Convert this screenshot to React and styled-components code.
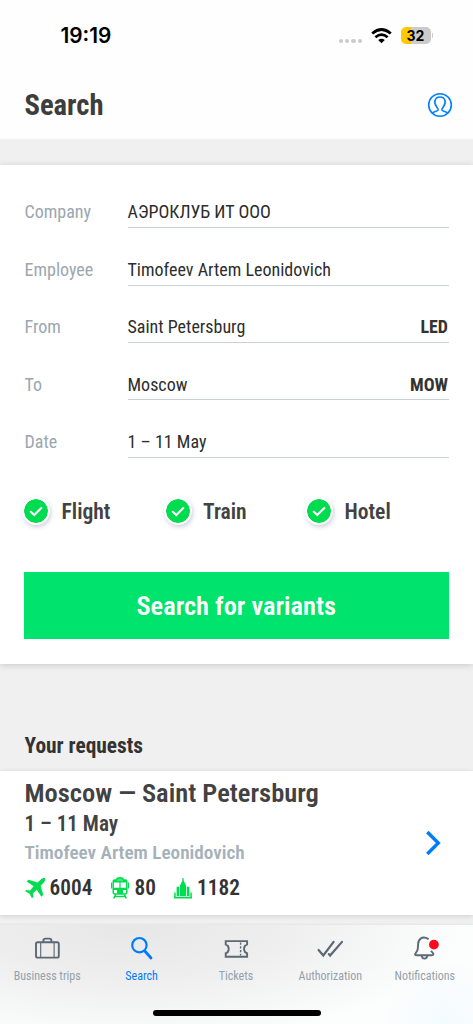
import React from "react";
import styled, { createGlobalStyle } from "styled-components";

const Global = createGlobalStyle`
  * { box-sizing: border-box; }
  body { margin: 0; background: #f0f0f0; }
`;

const Screen = styled.div`
  width: 473px;
  height: 1024px;
  overflow: hidden;
  display: flex;
  flex-direction: column;
  background: #f0f0f0;
  font-family: "Roboto Condensed", Roboto, sans-serif;
  font-stretch: 75%;
  color: #424242;
`;

const Text = styled.span`
  display: block;
  white-space: nowrap;
  margin: 0;
  font-size: ${(p) => p.$size}px;
  line-height: ${(p) => p.$line || p.$size * 1.2}px;
  font-weight: ${(p) => p.$weight || 400};
  color: ${(p) => p.$color || "#424242"};
`;

const Top = styled.header`
  flex: none;
  height: 139px;
  background: #fefefe;
`;

const StatusBar = styled.div`
  height: 70px;
  padding: 1px 40px 0 60.5px;
  display: flex;
  align-items: center;
  justify-content: space-between;
`;

const Clock = styled.span`
  font: 600 20.8px/24px Inter, sans-serif;
  color: #000;
`;

const StatusIcons = styled.div`
  display: flex;
  align-items: center;
`;

const Dots = styled.div`
  display: flex;
  gap: 2.2px;
  margin: 11px 8.5px 0 0;
  i { width: 4.2px; height: 4.2px; border-radius: 50%; background: #cbcbcb; }
`;

const Battery = styled.div`
  width: 30px;
  height: 17px;
  margin-left: 9px;
  border-radius: 5px;
  text-align: center;
  background: linear-gradient(90deg, #ffc800 10px, #cbcbcb 10px);
  font: 700 14px/17px Inter, sans-serif;
  color: #000;
`;

const BatteryTip = styled.div`
  width: 1.5px;
  height: 5px;
  margin-left: 1px;
  border-radius: 0 2px 2px 0;
  background: #cbcbcb;
`;

const TitleBar = styled.div`
  height: 70px;
  padding: 0 20px 0 24.5px;
  display: flex;
  align-items: center;
  justify-content: space-between;
`;

const SearchPanel = styled.section`
  flex: none;
  height: 499px;
  margin-top: 26px;
  padding: 18.3px 24px 0 24.5px;
  background: #fff;
  box-shadow: 0 1px 7px rgba(0, 0, 0, 0.17);
`;

const Field = styled.div`
  height: 57.35px;
  display: flex;
  align-items: flex-start;
`;

const FieldLabel = styled.div`
  width: 103px;
  padding-top: 18.2px;
`;

const FieldValue = styled.div`
  flex: 1;
  height: 45px;
  padding: 18.2px 1px 0 0;
  display: flex;
  justify-content: space-between;
  border-bottom: 1.5px solid #c9d1d4;
`;

const Options = styled.div`
  display: flex;
  height: 56px;
  margin-top: 13px;
  align-items: center;
`;

const Option = styled.div`
  width: 141.5px;
  display: flex;
  align-items: center;
  gap: 11.5px;
`;

const OptionName = styled(Text)`
  padding-top: 2px;
`;

const Check = styled.div`
  width: 28px;
  height: 28px;
  margin-left: -2.5px;
  border: 2px solid #fff;
  border-radius: 50%;
  background: #00dc50;
  background-clip: padding-box;
  box-shadow: 1px 2px 4px rgba(50, 60, 100, 0.24);
  svg { display: block; }
`;

const SearchButton = styled.button`
  width: 424.5px;
  height: 67px;
  margin: 33px 0 0 -0.5px;
  padding: 0;
  display: flex;
  align-items: center;
  justify-content: center;
  border: 0;
  background: #00e36c;
  font-family: inherit;
  font-stretch: inherit;
`;

const SectionTitle = styled.div`
  flex: none;
  height: 107px;
  padding: 68px 24.5px 0;
`;

const RequestCard = styled.article`
  flex: none;
  height: 143.5px;
  padding: 6px 32.5px 0 24.5px;
  display: flex;
  justify-content: space-between;
  background: #fff;
  box-shadow: 0 1px 5px rgba(0, 0, 0, 0.14);
`;

const Prices = styled.div`
  display: flex;
  align-items: center;
  margin-top: 8px;
  height: 26px;
`;

const Price = styled.div`
  display: flex;
  align-items: center;
  gap: ${(p) => p.$gap}px;
  width: ${(p) => p.$width}px;
`;

const TabBar = styled.nav`
  flex: none;
  height: 99px;
  margin-top: 10.5px;
  display: flex;
  flex-direction: column;
  align-items: center;
  justify-content: space-between;
  background: radial-gradient(circle at 445px 95px, rgba(243, 251, 255, 0.9), transparent 60px),
    radial-gradient(ellipse 330px 120px at 130px 0, #e7e7e7, #eeeeee 45%, #fcfdfd 100%);
  box-shadow: 0 -1px 2px rgba(0, 0, 0, 0.05);
`;

const Tabs = styled.div`
  width: 472px;
  display: grid;
  grid-template-columns: repeat(5, 1fr);
  align-self: flex-start;
`;

const Tab = styled.div`
  display: flex;
  flex-direction: column;
  align-items: center;
  padding-top: 10.5px;
  gap: 5.5px;
`;

const HomeIndicator = styled.div`
  width: 168px;
  height: 6px;
  margin-bottom: 8px;
  border-radius: 3px;
  background: #000;
`;

const WifiIcon = () => (
  <svg width="21" height="16" viewBox="0 0 21 16">
    <g fill="none" stroke="#000" strokeWidth="2.7">
      <path d="M1.2 5.6 Q10.5-2.6 19.8 5.6" />
      <path d="M4.4 9.2 Q10.5 4 16.6 9.2" />
    </g>
    <path d="M7.2 12 Q10.5 9.4 13.8 12 L10.5 15.2Z" />
  </svg>
);

const ProfileIcon = () => (
  <svg width="26" height="26" viewBox="0 0 26 26" fill="none" stroke="#0080ff" strokeWidth="1.6">
    <circle cx="13" cy="13" r="11.3" />
    <path d="M5 21.4C6.4 19.6 10.7 19.5 11.1 18C11.3 16.8 10.7 16.4 9.6 14.8C6.4 10.4 7.6 5 13 5S19.6 10.4 16.4 14.8C15.3 16.4 14.7 16.8 14.9 18C15.3 19.5 19.6 19.6 21 21.4" />
  </svg>
);

const CheckIcon = () => (
  <svg width="24" height="24" viewBox="0 0 24 24">
    <path d="M6.8 12.8 10.3 16.1 17.3 9" fill="none" stroke="#fff" strokeWidth="2.1" strokeLinecap="round" />
  </svg>
);

const PlaneIcon = () => (
  <svg width="21" height="22" viewBox="0 0 22 22" fill="#00dc50">
    <path d="M20.8.8C19.7-.1 17.7.8 16.5 2L13.2 5.2 3.8 2.3 1.7 4.2 9.1 9.2 5.2 13.5 1.4 13 .1 14.3 4.8 17 7.3 21.8 8.7 20.5 8.2 16.7 12.3 12.8 17.2 20.2 19.1 18.2 16.4 8.6 19.7 5.2C21 4 21.6 1.8 20.8.8Z" />
  </svg>
);

const TrainIcon = () => (
  <svg width="18" height="22" viewBox="0 0 18 22">
    <rect x="2.2" y="2.9" width="13.6" height="14.2" rx="1.6" fill="none" stroke="#00dc50" strokeWidth="1.5" />
    <path d="M5.7 2.5Q6 .9 9 .9T12.3 2.5" fill="none" stroke="#00dc50" strokeWidth="1.6" />
    <g fill="#00dc50">
      <path d="M2 3H6V4H12V3H16V5.6H2ZM8.4 5.4H9.6V11H8.4ZM2 10.8H16V13H2ZM6 13H12V17H6ZM0 5.5H1.1V11.5H0ZM16.9 5.5H18V11.5H16.9Z" />
    </g>
    <path d="M4.6 17.5 2.7 21.5M13.4 17.5 15.3 21.5M4 19.5H14" stroke="#00dc50" strokeWidth="1.6" />
  </svg>
);

const HotelIcon = () => (
  <svg width="18" height="21" viewBox="0 0 18 21" fill="#00dc50">
    <path d="M8.5 0H9.5L9.8 3.2 11 5V6.6H12V18H6V6.6H7V5L8.2 3.2Z" />
    <path d="M2.6 8.8H5.2V18H2.6ZM12.8 8.8H15.4V18H12.8ZM.2 14.5H1.7V19H.2ZM16.3 14.5H17.8V19H16.3ZM0 18.7H18V20.4H0Z" />
  </svg>
);

const Chevron = styled.svg`
  display: block;
  margin-top: 53px;
`;

const ChevronIcon = () => (
  <Chevron width="16" height="26" viewBox="0 0 16 26">
    <path d="M2.3 2 13.3 13 2.3 24" fill="none" stroke="#007bff" strokeWidth="3.4" />
  </Chevron>
);

const TabSvg = styled.svg.attrs({ width: 28, height: 28, viewBox: "0 0 28 28", fill: "none" })`
  stroke: ${(p) => p.$color || "#5c6873"};
  stroke-width: 1.9;
  overflow: visible;
`;

const SuitcaseIcon = () => (
  <TabSvg>
    <rect x="3" y="6.2" width="22.8" height="15.4" rx="1.6" />
    <path d="M10.4 6V4.5Q10.4 2.6 12.4 2.6H16.4Q18.4 2.6 18.4 4.5V6" />
    <path d="M7.7 7V21.5M21.1 7V21.5" strokeWidth="1.1" />
  </TabSvg>
);
const MagnifierIcon = () => (
  <TabSvg $color="#007bff">
    <circle cx="11.4" cy="9.2" r="7.2" strokeWidth="2.2" />
    <path d="M16.8 15 23 22" strokeWidth="2.8" strokeLinecap="round" />
  </TabSvg>
);
const TicketIcon = () => (
  <TabSvg>
    <path d="M3.7 5.1H25.1V8.5L23.1 9.6Q21 12.9 23.1 16.2L25.1 17.3V20.7H3.7V17.3L5.7 16.2Q7.8 12.9 5.7 9.6L3.7 8.5Z" />
    <path d="M18.6 6.6V19.5" strokeWidth="1.4" strokeDasharray="2.2 1.5" />
  </TabSvg>
);
const DoubleCheckIcon = () => (
  <TabSvg>
    <path d="M2.6 14 7.3 19.5 17.6 5.9M12.8 18.1 14.1 19.5 26 5.9" strokeWidth="2.2" strokeLinecap="round" />
  </TabSvg>
);
const BellIcon = () => (
  <TabSvg>
    <path d="M17.6 3.1C11-.7 7.3 3.4 7.1 8.1 6.9 14.3 6.6 14.7 4.5 17.4 3.5 18.7 4.4 19.3 5.8 19.3H20.4C23 19.3 22.8 17.9 21.4 16.4L19.9 14.8" />
    <path d="M10.7 19.6Q11.2 22.7 13.5 22.7T16.3 19.6" strokeWidth="1.8" />
    <circle cx="22.9" cy="8.6" r="4.9" fill="#ff0a1c" stroke="none" />
  </TabSvg>
);

const fields = [
  ["Company", "АЭРОКЛУБ ИТ ООО"],
  ["Employee", "Timofeev Artem Leonidovich"],
  ["From", "Saint Petersburg", "LED"],
  ["To", "Moscow", "MOW"],
  ["Date", "1 – 11 May"],
];

const tabs = [
  ["Business trips", SuitcaseIcon],
  ["Search", MagnifierIcon],
  ["Tickets", TicketIcon],
  ["Authorization", DoubleCheckIcon],
  ["Notifications", BellIcon],
];

export default function App() {
  return (
    <>
      <Global />
      <Screen>
        <Top>
          <StatusBar>
            <Clock>19:19</Clock>
            <StatusIcons>
              <Dots><i /><i /><i /><i /></Dots>
              <WifiIcon />
              <Battery>32</Battery>
              <BatteryTip />
            </StatusIcons>
          </StatusBar>
          <TitleBar>
            <Text as="h1" $size={28.6} $line={36} $weight={700} $color="#3d3d3d">Search</Text>
            <ProfileIcon />
          </TitleBar>
        </Top>
        <SearchPanel>
          {fields.map(([label, value, code]) => (
            <Field key={label}>
              <FieldLabel><Text $size={18} $color="#9aa7b0">{label}</Text></FieldLabel>
              <FieldValue>
                <Text $size={18} $color="#2d2d2d">{value}</Text>
                {code && <Text $size={18} $weight={700} $color="#333">{code}</Text>}
              </FieldValue>
            </Field>
          ))}
          <Options>
            {["Flight", "Train", "Hotel"].map((name) => (
              <Option key={name}>
                <Check><CheckIcon /></Check>
                <OptionName $size={21.6} $line={26} $weight={600}>{name}</OptionName>
              </Option>
            ))}
          </Options>
          <SearchButton>
            <Text $size={26.4} $line={32} $weight={600} $color="#fff">Search for variants</Text>
          </SearchButton>
        </SearchPanel>
        <SectionTitle><Text as="h2" $size={21.4} $line={27} $weight={700} $color="#333">Your requests</Text></SectionTitle>
        <RequestCard>
          <div>
            <Text as="h3" $size={26.5} $line={32} $weight={600}>Moscow — Saint Petersburg</Text>
            <Text $size={21.2} $line={30} $weight={600}>1 – 11 May</Text>
            <Text $size={19.2} $line={28} $weight={600} $color="#a5b1b9">Timofeev Artem Leonidovich</Text>
            <Prices>
              <Price $gap={4} $width={86}><PlaneIcon /><Text $size={21.3} $line={26} $weight={600} $color="#333">6004</Text></Price>
              <Price $gap={6} $width={63}><TrainIcon /><Text $size={21.3} $line={26} $weight={600} $color="#333">80</Text></Price>
              <Price $gap={5.5} $width={80}><HotelIcon /><Text $size={21.3} $line={26} $weight={600} $color="#333">1182</Text></Price>
            </Prices>
          </div>
          <ChevronIcon />
        </RequestCard>
        <TabBar>
          <Tabs>
            {tabs.map(([name, Icon]) => (
              <Tab key={name}>
                <Icon />
                <Text $size={12} $line={14} $color={name === "Search" ? "#007bff" : "#94a1ab"}>{name}</Text>
              </Tab>
            ))}
          </Tabs>
          <HomeIndicator />
        </TabBar>
      </Screen>
    </>
  );
}
